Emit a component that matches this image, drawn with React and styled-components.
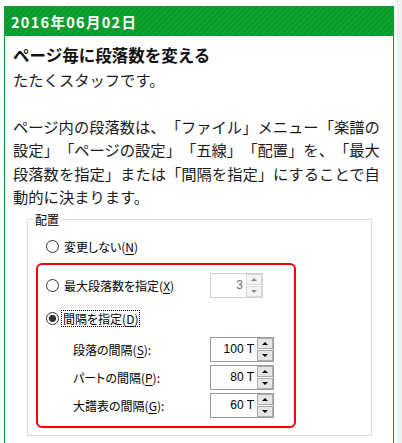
import React from "react";
import styled, { createGlobalStyle } from "styled-components";

const GlobalStyle = createGlobalStyle`
  html, body {
    margin: 0;
    padding: 0;
    background: #fff;
  }
  body {
    height: 443px;
    overflow: hidden;
    font-family: "Noto Sans CJK JP", "Noto Sans", sans-serif;
    color: #1a1a1a;
    text-spacing-trim: space-all;
  }
`;

const Page = styled.div`
  display: flex;
  height: 443px;
`;

const Main = styled.div`
  flex: 1;
  padding: 6px 3px 0 4px;
`;

const Gutter = styled.div`
  width: 5px;
  background: #f0f0f0;
`;

const Card = styled.article`
  width: 390px;
  height: 100%;
  box-sizing: border-box;
  border-left: 1px solid #119a2c;
  border-right: 1px solid #119a2c;
`;

const DateBar = styled.header`
  height: 30px;
  margin: 0 -1px;
  display: flex;
  align-items: center;
  padding-left: 7px;
  background: repeating-linear-gradient(
    -45deg,
    #079a29 0 2px,
    #14a134 2px 4px
  );
  color: #fff;
  font-size: 14.5px;
  font-weight: 700;
  letter-spacing: 1.3px;
`;

const Body = styled.div`
  padding: 7px 8px 0 8px;
`;

const Title = styled.h2`
  margin: 0;
  font-size: 16.5px;
  font-weight: 700;
  line-height: 24px;
  color: #111;
`;

const Lead = styled.p`
  margin: 0;
  font-size: 15.3px;
  line-height: 25px;
`;

const Para = styled.p`
  margin: 23px 0 0;
  width: 372px;
  font-size: 15.3px;
  line-height: 23.4px;
  text-spacing-trim: space-all;
`;

const Group = styled.fieldset`
  margin: 3px 0 0 14px;
  width: 345px;
  box-sizing: border-box;
  border: 1px solid #dcdcdc;
  padding: 10px 8px 7px;
  font-size: 12px;
  font-feature-settings: "palt";
  color: #000;
`;

const Legend = styled.legend`
  margin-left: -3px;
  padding: 0 2px;
  line-height: 16px;
`;

const Option = styled.label`
  display: grid;
  grid-template-columns: ${(p) => p.$cols || "auto"};
  align-items: center;
  height: ${(p) => p.$h || 18}px;
  margin: ${(p) => p.$m || "0"};
`;

const OptionMain = styled.span`
  display: flex;
  align-items: center;
`;

const Radio = styled.span`
  width: 13px;
  height: 13px;
  box-sizing: border-box;
  border: 1px solid #333;
  border-radius: 50%;
  background: ${(p) =>
    p.$checked
      ? "radial-gradient(circle, #333 0 3.3px, #fff 3.9px)"
      : "#fff"};
  flex: none;
`;

const OptionText = styled.span`
  margin-left: ${(p) => (p.$focused ? 2 : 4)}px;
  padding: 0 ${(p) => (p.$focused ? 1 : 0)}px;
  line-height: 15px;
  border: 1px dotted ${(p) => (p.$focused ? "#000" : "transparent")};
`;

const Key = styled.u`
  text-underline-offset: 2px;
`;

const Highlight = styled.div`
  margin-top: 7px;
  width: 260px;
  box-sizing: border-box;
  border: 2px solid #f00;
  border-radius: 6px;
  padding: 8px;
`;

const SubList = styled.div`
  display: flex;
  flex-direction: column;
  gap: 3px;
  margin-top: 9px;
`;

const SubRow = styled.div`
  display: grid;
  grid-template-columns: 137px 64px;
  align-items: center;
  height: 25px;
  padding-left: 27px;
`;

const Spin = styled.div`
  display: flex;
  width: ${(p) => p.$w}px;
  height: 25px;
  box-sizing: border-box;
  border: 1px solid ${(p) => (p.$disabled ? "#d0d0d0" : "#9c9c9c")};
  background: #fff;
`;

const SpinValue = styled.div`
  flex: 1;
  text-align: right;
  padding-right: 3px;
  font-family: "Liberation Sans", Arial, sans-serif;
  font-size: 12px;
  line-height: 23px;
  color: ${(p) => (p.$disabled ? "#6d6d6d" : "#000")};
`;

const SpinButtons = styled.div`
  width: 16px;
  display: flex;
  flex-direction: column;
  gap: 1px;
`;

const SpinBtn = styled.div`
  flex: 1;
  display: grid;
  place-items: center;
  border: 1px solid ${(p) => (p.$disabled ? "#dadada" : "#adadad")};
  background: ${(p) => (p.$disabled ? "#f3f3f3" : "#e6e6e6")};
`;

const Arrow = styled.span`
  width: 0;
  height: 0;
  border-left: 3px solid transparent;
  border-right: 3px solid transparent;
  ${(p) => (p.$down ? "border-top" : "border-bottom")}: 3px solid
    ${(p) => (p.$disabled ? "#8a8a8a" : "#000")};
`;

const Spinner = ({ value, width, disabled }) => (
  <Spin $w={width} $disabled={disabled}>
    <SpinValue $disabled={disabled}>{value}</SpinValue>
    <SpinButtons>
      <SpinBtn $disabled={disabled}>
        <Arrow $disabled={disabled} />
      </SpinBtn>
      <SpinBtn $disabled={disabled}>
        <Arrow $down $disabled={disabled} />
      </SpinBtn>
    </SpinButtons>
  </Spin>
);

const spacing = [
  { label: "段落の間隔", key: "S", value: "100 T" },
  { label: "パートの間隔", key: "P", value: "80 T" },
  { label: "大譜表の間隔", key: "G", value: "60 T" },
];

export default function App() {
  return (
    <>
      <GlobalStyle />
      <Page>
        <Main>
          <Card>
            <DateBar>2016年06月02日</DateBar>
            <Body>
              <Title>ページ毎に段落数を変える</Title>
              <Lead>たたくスタッフです。</Lead>
              <Para>
                ページ内の段落数は、「ファイル」メニュー「楽譜の
                <br />
                設定」「ページの設定」「五線」「配置」を、「最大
                <br />
                段落数を指定」または「間隔を指定」にすることで自
                <br />
                動的に決まります。
              </Para>
              <Group>
                <Legend>配置</Legend>
                <Option $m="0 0 0 10px">
                  <OptionMain>
                    <Radio />
                    <OptionText>
                      変更しない(<Key>N</Key>)
                    </OptionText>
                  </OptionMain>
                </Option>
                <Highlight>
                  <Option $cols="164px 53px" $h={25}>
                    <OptionMain>
                      <Radio />
                      <OptionText>
                        最大段落数を指定(<Key>X</Key>)
                      </OptionText>
                    </OptionMain>
                    <Spinner value="3" width={53} disabled />
                  </Option>
                  <Option $m="12px 0 0">
                    <OptionMain>
                      <Radio $checked />
                      <OptionText $focused>
                        間隔を指定(<Key>D</Key>)
                      </OptionText>
                    </OptionMain>
                  </Option>
                  <SubList>
                    {spacing.map((s) => (
                      <SubRow key={s.key}>
                        <span>
                          {s.label}(<Key>{s.key}</Key>):
                        </span>
                        <Spinner value={s.value} width={64} />
                      </SubRow>
                    ))}
                  </SubList>
                </Highlight>
              </Group>
            </Body>
          </Card>
        </Main>
        <Gutter />
      </Page>
    </>
  );
}
